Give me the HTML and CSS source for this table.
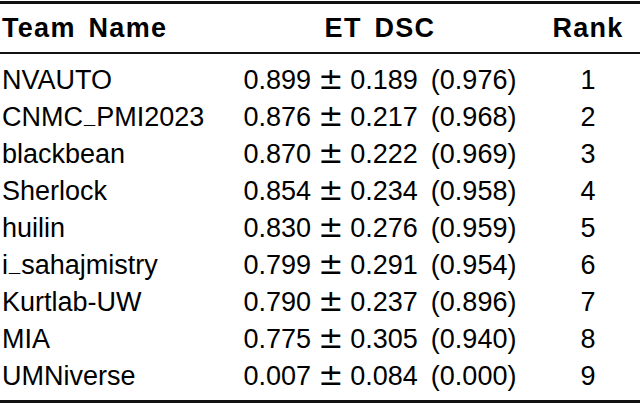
FILE: index.html
```html
<!DOCTYPE html>
<html>
<head>
<meta charset="utf-8">
<link rel="stylesheet" href="styles.css">
</head>
<body>
<table class="results">
  <colgroup>
    <col class="c-name">
    <col class="c-dsc">
    <col class="c-rank">
  </colgroup>
  <thead>
    <tr>
      <th class="name">Team Name</th>
      <th class="dsc">ET DSC</th>
      <th class="rank">Rank</th>
    </tr>
  </thead>
  <tbody>
    <tr><td class="name">NVAUTO</td><td class="dsc">0.899<span class="pm">±</span>0.189<span class="med">(0.976)</span></td><td class="rank">1</td></tr>
    <tr><td class="name">CNMC<span class="us">_</span>PMI2023</td><td class="dsc">0.876<span class="pm">±</span>0.217<span class="med">(0.968)</span></td><td class="rank">2</td></tr>
    <tr><td class="name">blackbean</td><td class="dsc">0.870<span class="pm">±</span>0.222<span class="med">(0.969)</span></td><td class="rank">3</td></tr>
    <tr><td class="name">Sherlock</td><td class="dsc">0.854<span class="pm">±</span>0.234<span class="med">(0.958)</span></td><td class="rank">4</td></tr>
    <tr><td class="name">huilin</td><td class="dsc">0.830<span class="pm">±</span>0.276<span class="med">(0.959)</span></td><td class="rank">5</td></tr>
    <tr><td class="name">i<span class="us">_</span>sahajmistry</td><td class="dsc">0.799<span class="pm">±</span>0.291<span class="med">(0.954)</span></td><td class="rank">6</td></tr>
    <tr><td class="name">Kurtlab-UW</td><td class="dsc">0.790<span class="pm">±</span>0.237<span class="med">(0.896)</span></td><td class="rank">7</td></tr>
    <tr><td class="name">MIA</td><td class="dsc">0.775<span class="pm">±</span>0.305<span class="med">(0.940)</span></td><td class="rank">8</td></tr>
    <tr><td class="name">UMNiverse</td><td class="dsc">0.007<span class="pm">±</span>0.084<span class="med">(0.000)</span></td><td class="rank">9</td></tr>
  </tbody>
</table>
</body>
</html>
```

FILE: styles.css
```css
html, body {
  margin: 0;
  padding: 0;
  background: #fff;
}

body {
  padding-top: 1px;
  font-family: "Liberation Sans", Arial, sans-serif;
  font-size: 27px;
  line-height: 37px;
  color: #000;
}

.results {
  width: 640px;
  border-collapse: collapse;
  table-layout: fixed;
}

.c-name { width: 230px; }
.c-dsc { width: 300px; }
.c-rank { width: 110px; }

.results th,
.results td {
  padding: 0;
  white-space: nowrap;
}

.results thead tr {
  border-top: 3px solid #111;
  border-bottom: 2px solid #111;
}

.results th {
  font-weight: bold;
  letter-spacing: 1.3px;
  word-spacing: 4px;
  padding-top: 6px;
  padding-bottom: 5px;
}

.results tbody tr:first-child td {
  padding-top: 8px;
}

.results tbody tr:last-child td {
  padding-bottom: 5px;
}

.results tbody tr:last-child {
  border-bottom: 3px solid #111;
}

.name {
  text-align: left;
  padding-left: 2px !important;
}

.dsc {
  text-align: center;
}

.rank {
  text-align: center;
  padding-left: 6px !important;
}

.us {
  font-size: 20px;
  font-weight: bold;
  line-height: 0;
  vertical-align: 3px;
  margin: 0 1px;
}

.pm {
  font-family: "DejaVu Sans", sans-serif;
  font-size: 30px;
  line-height: 0;
  margin: 0 7px;
}

.med {
  margin-left: 13px;
}
```
